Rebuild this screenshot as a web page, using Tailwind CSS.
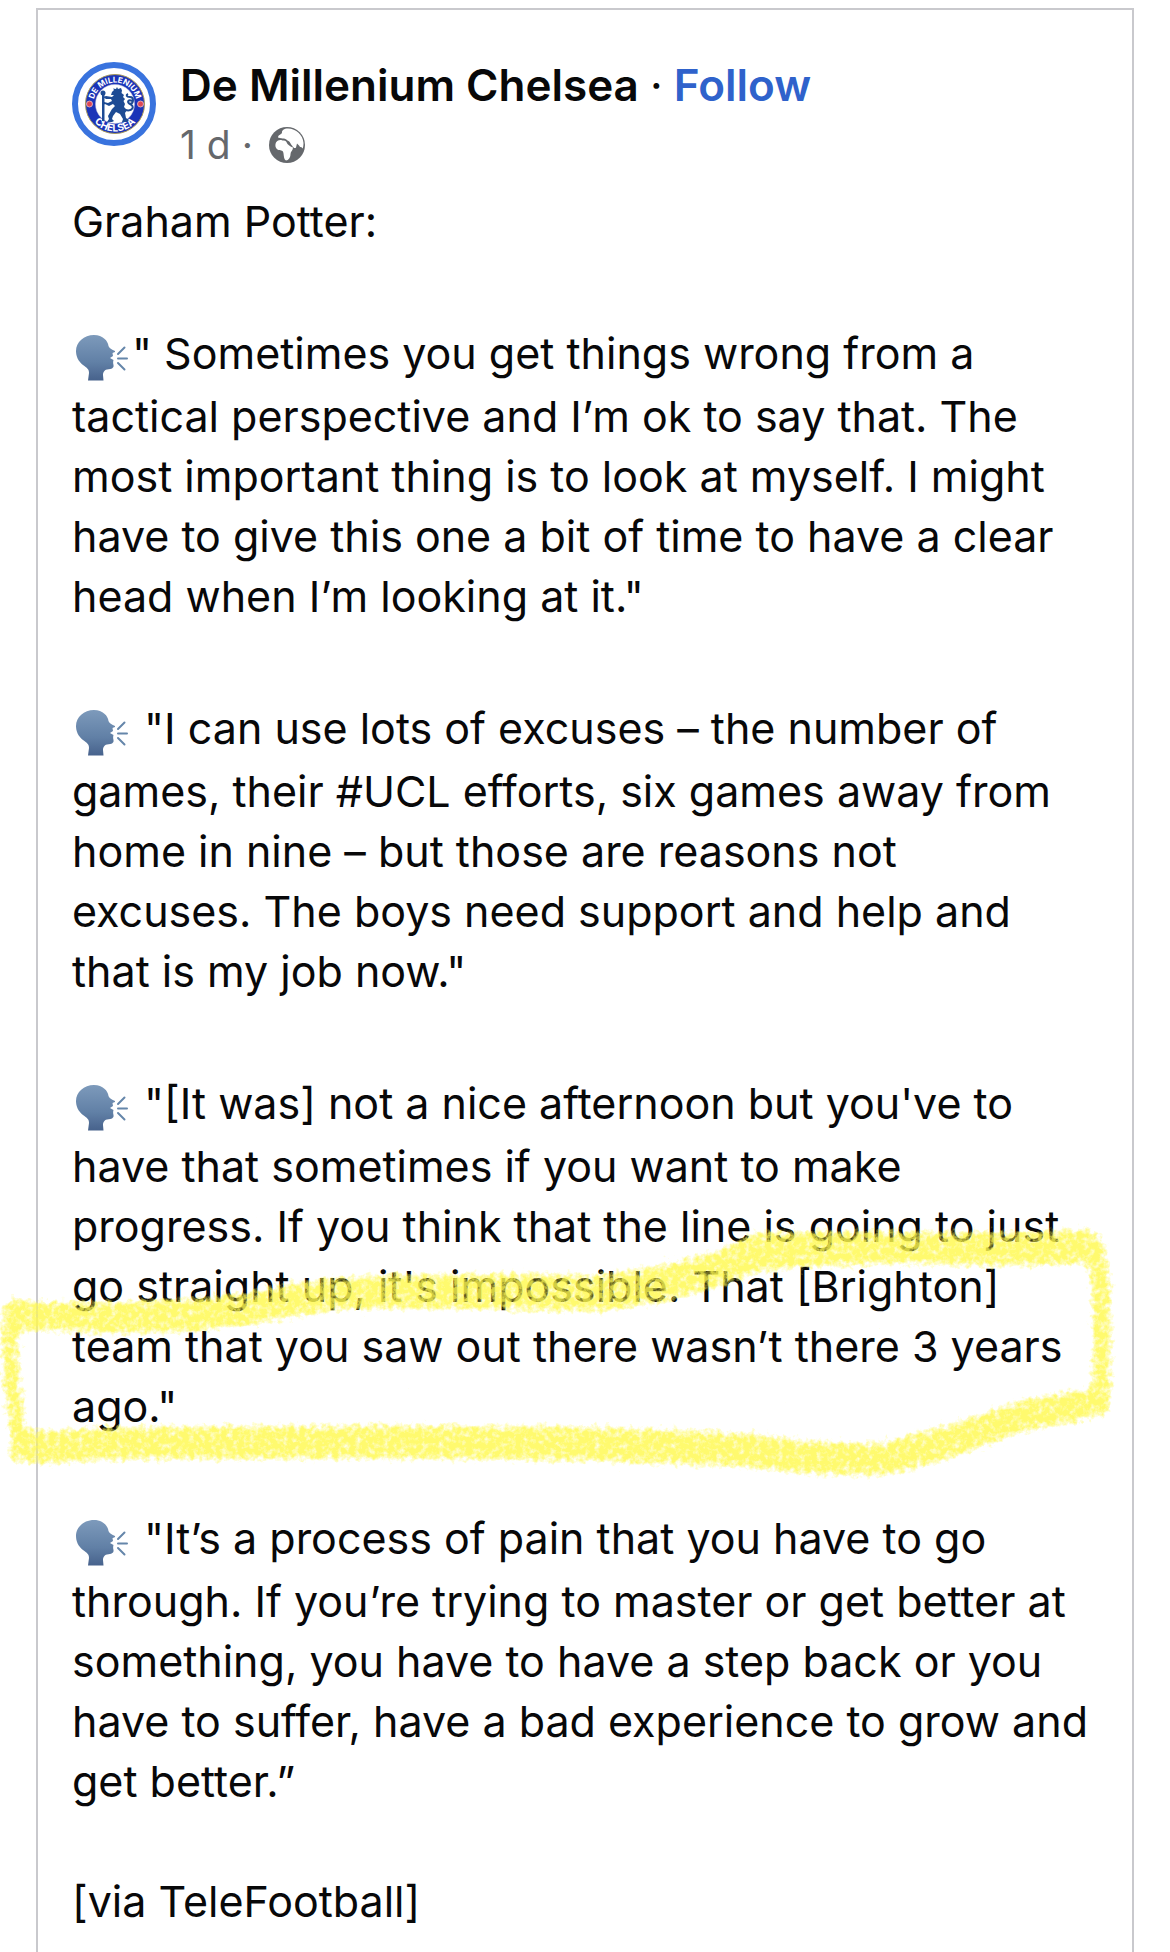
<!DOCTYPE html>
<html lang="en">
<head>
    <meta charset="UTF-8">
    <meta name="viewport" content="width=device-width, initial-scale=1.0">
    <script src="https://cdn.jsdelivr.net/npm/@tailwindcss/browser@4"></script>
    <title>De Millenium Chelsea</title>
</head>
<body class="bg-white text-[#080809] font-[Inter,sans-serif] overflow-x-hidden">

    <!-- Shared symbols -->
    <svg class="absolute w-0 h-0" aria-hidden="true">
        <defs>
            <linearGradient id="head-fill" x1="0" y1="0" x2="0" y2="1">
                <stop offset="0" stop-color="#7d9abb"/>
                <stop offset="0.6" stop-color="#6180a6"/>
                <stop offset="1" stop-color="#47628c"/>
            </linearGradient>
        </defs>
        <symbol id="speaking-head" viewBox="0 -1 60 72">
            <path fill="url(#head-fill)" d="M4 36C4 27 12 20 22 20C31 20 36 26 36.500 31C37 33 39 34 43 36C43.500 37 42 37.500 40.500 38L41 41L38 43L41.500 45C41 47 41 48 41.500 50C42 53 40 54 35 54.500C32 55 31 58 31 60L31.500 65.500H16L17 58C17 54 15 53 11 50C6 46 4 41 4 36Z"/>
            <path d="M46 39L52.500 32.500M46 43.500H55M46 48L52.500 54.500" fill="none" stroke="#6586aa" stroke-width="2" stroke-linecap="round"/>
        </symbol>
    </svg>

    <main class="flex min-h-screen pt-2 px-9">
        <article class="grow border-2 border-b-0 border-[#c9c9cd] px-[34px] pt-[52px]">

            <header class="flex items-start gap-6">
                <svg class="w-[84px] h-[84px] shrink-0" viewBox="0 0 84 84" role="img" aria-label="De Millenium Chelsea">
                    <circle cx="42" cy="42" r="39" fill="#fff" stroke="#3973de" stroke-width="6"/>
                    <circle cx="43" cy="42" r="29.500" fill="#1b34b8" stroke="#a5975a" stroke-width="1"/>
                    <circle cx="43" cy="42" r="19.500" fill="#fff" stroke="#c3c7dd" stroke-width="0.500"/>
                    <circle cx="17.500" cy="42" r="3" fill="#dc4655" stroke="#f3c5c5" stroke-width="0.800"/>
                    <circle cx="68.500" cy="42" r="3" fill="#dc4655" stroke="#f3c5c5" stroke-width="0.800"/>
                    <path id="arc-top" d="M21.500 45V42A21.500 21.500 0 0 1 64.500 42V45" fill="none"/>
                    <path id="arc-bottom" d="M15.500 42A27.500 27.500 0 0 0 70.500 42" fill="none"/>
                    <text class="font-bold text-[8px]" fill="#fff" text-anchor="middle"><textPath href="#arc-top" startOffset="50%">DE MILLENIUM</textPath></text>
                    <text class="font-bold text-[10px]" fill="#fff" text-anchor="middle"><textPath href="#arc-bottom" startOffset="50%">CHELSEA</textPath></text>
                    <!-- Lion with staff -->
                    <g fill="#1d4b94">
                        <path d="M40 30L42 28L41 26.500L44 27L45 25L46 27L49 26L50 28.500L49.500 31L52 33L51 35L53 37L51.500 39L53 42L52 45L55 48L53 51L54 56L57 58L55 60H50L51 57L48 52L44 50L41 54L40 57L42 59L40 60H35L37 57L36 54L40 47L43 44L41 42L37 44L33 42L31 43L32 40L36 41L40 39L39 37L34 37L31 35L34 34L40 35L42 33L39 33Z"/>
                        <path d="M30 33H32.500V59H30Z"/>
                        <circle cx="31" cy="31" r="2.500"/>
                    </g>
                    <path d="M53 48C61 50 63 44 58 42C54 40 57 37 60 39M58 42C62 41 62 35 58 35C54 35 54 33 56 32" fill="none" stroke="#1d4b94" stroke-width="2"/>
                </svg>

                <div class="flex flex-col">
                    <h1 class="text-[44px] leading-[46px] font-semibold">De Millenium Chelsea <span class="font-normal">·</span> <a href="#" class="text-[#2f62cb]">Follow</a></h1>
                    <p class="flex items-center gap-4 text-[39px] leading-[50px] mt-3 text-[#65686c]">
                        <span>1 d ·</span>
                        <svg class="w-9 h-9" viewBox="0 0 36 36" role="img" aria-label="Public">
                            <circle cx="18" cy="18" r="18" fill="#65686c"/>
                            <path fill="#fff" d="M9 10.500C9 8 12 7.500 13 6C12.500 3.500 15 1.500 19 1.500C27 1.500 34 8 34.500 16C34.500 19 34 21 33.500 21.500C32 19 31 21 30.500 19L28 16.500L27 20.500C26 22 24 20.500 23 18.500C21 16.500 21.500 14.500 18.500 13.500C16.500 11 14 12 9 10.500Z"/>
                            <path fill="#fff" d="M7 15.500C9 13 11 12.500 13.500 13.500C17 13 17.500 15 18.500 17C20.500 19 22 20 24 20.500C24 23.500 21.500 24.500 21.500 27C21.500 30.500 19.500 33.500 17 33.500C15 32.500 15 30 14.500 26.500C14 23 12.500 23.500 9.500 23C7 22 5.500 19 7 15.500Z"/>
                        </svg>
                    </p>
                </div>
            </header>

            <div class="mt-[21px] text-[43px] leading-[60px]">
                <p>Graham Potter:</p>

                <p class="mt-[63px]"><svg class="inline-block w-[60px] h-[72px] align-[-17px]" role="img" aria-label="Speaking head"><use href="#speaking-head"/></svg>" Sometimes you get things wrong from a<br>
                tactical perspective and I’m ok to say that. The<br>
                most important thing is to look at myself. I might<br>
                have to give this one a bit of time to have a clear<br>
                head when I’m looking at it."</p>

                <p class="mt-[63px]"><svg class="inline-block w-[60px] h-[72px] align-[-17px]" role="img" aria-label="Speaking head"><use href="#speaking-head"/></svg> "I can use lots of excuses – the number of<br>
                games, their #UCL efforts, six games away from<br>
                home in nine – but those are reasons not<br>
                excuses. The boys need support and help and<br>
                that is my job now."</p>

                <div class="relative mt-[63px]">
                    <p><svg class="inline-block w-[60px] h-[72px] align-[-17px]" role="img" aria-label="Speaking head"><use href="#speaking-head"/></svg> "[It was] not a nice afternoon but you've to<br>
                    have that sometimes if you want to make<br>
                    progress. If you think that the line is going to just<br>
                    go straight up, it's impossible. That [Brighton]<br>
                    team that you saw out there wasn’t there 3 years<br>
                    ago."</p>

                    <!-- Crayon highlight -->
                    <svg class="absolute -left-[72px] top-[145px] w-[1130px] h-[290px] max-w-none pointer-events-none" viewBox="0 1210 1130 290" aria-hidden="true">
                        <filter id="crayon" filterUnits="userSpaceOnUse" x="0" y="1210" width="1130" height="290">
                            <feGaussianBlur in="SourceAlpha" stdDeviation="4" result="soft"/>
                            <feTurbulence type="fractalNoise" baseFrequency="0.18" numOctaves="3" seed="4"/>
                            <feColorMatrix values="0 0 0 0 0  0 0 0 0 0  0 0 0 0 0  0 0 0 1 0" result="grain"/>
                            <feComposite in="soft" in2="grain" operator="arithmetic" k1="0" k2="1.700" k3="1.900" k4="-1.700" result="rough"/>
                            <feFlood flood-color="#fff94f" flood-opacity="0.820"/>
                            <feComposite in2="rough" operator="in"/>
                        </filter>
                        <path filter="url(#crayon)" fill="#fffa5c" fill-rule="evenodd" d="M1 1312L10 1298L38 1301L100 1302L190 1298L245 1293L287 1284L340 1277L400 1274L500 1273L600 1275L665 1264L720 1250L755 1232L800 1231L900 1231L1000 1232L1070 1230L1092 1229L1106 1246L1112 1290L1112 1395L1109 1416L1070 1425L1020 1435L960 1457L920 1470L880 1478L810 1477L760 1471L670 1466L570 1463L400 1461L200 1462L100 1462L50 1466L10 1464L8 1430L2 1380L0 1340Z M22 1333L60 1333L100 1336L190 1334L245 1328L287 1320L340 1312L400 1311L500 1312L600 1314L665 1304L720 1288L755 1275L800 1270L900 1266L1000 1268L1070 1267L1088 1266L1091 1300L1091 1389L1070 1391L1020 1400L960 1421L920 1432L880 1443L810 1441L760 1434L670 1429L570 1426L400 1425L200 1426L100 1427L50 1430L27 1430L22 1385L19 1345Z"/>
                    </svg>
                </div>

                <p class="mt-[63px]"><svg class="inline-block w-[60px] h-[72px] align-[-17px]" role="img" aria-label="Speaking head"><use href="#speaking-head"/></svg> "It’s a process of pain that you have to go<br>
                through. If you’re trying to master or get better at<br>
                something, you have to have a step back or you<br>
                have to suffer, have a bad experience to grow and<br>
                get better.”</p>

                <p class="mt-[60px]">[via TeleFootball]</p>
            </div>
        </article>
    </main>

</body>
</html>
